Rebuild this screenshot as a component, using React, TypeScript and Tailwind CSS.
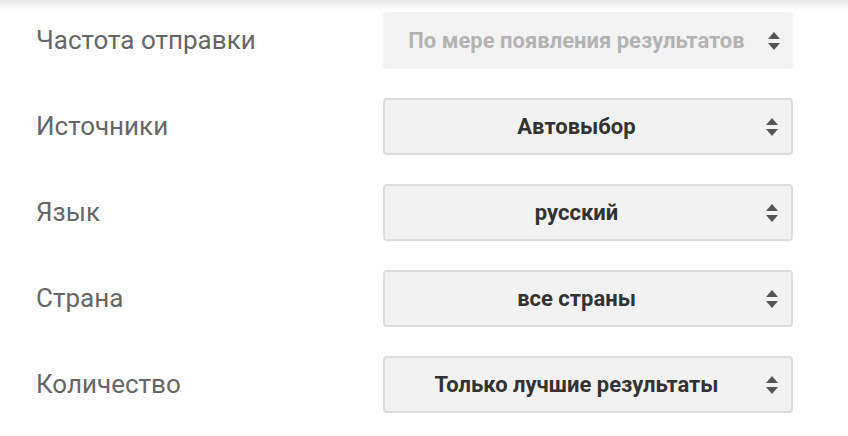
import { ReactNode } from 'react';

const rows = [
    { label: 'Частота отправки', value: 'По мере появления результатов', disabled: true },
    { label: 'Источники', value: 'Автовыбор' },
    { label: 'Язык', value: 'русский' },
    { label: 'Страна', value: 'все страны' },
    { label: 'Количество', value: 'Только лучшие результаты' },
];

const Arrows = () => (
    <svg width="14" height="24" viewBox="0 0 14 24" className="text-[#555]">
        <path d="M7 3 L13 10 L1 10 Z" fill="currentColor" />
        <path d="M1 14 L13 14 L7 21 Z" fill="currentColor" />
    </svg>
);

const Select = ({ children, disabled }: { children: ReactNode; disabled?: boolean }) => (
    <div
        className={
            'flex h-[57px] w-[410px] items-center rounded-[4px] pl-3 pr-3 ' +
            (disabled
                ? 'bg-[#f3f3f3] text-[#b3b3b3]'
                : 'border-2 border-[#dcdcdc] bg-[#f2f2f2] text-[#333]')
        }
    >
        <span className="flex-1 pr-[9px] text-center text-[22px] font-bold">{children}</span>
        <Arrows />
    </div>
);

export default function App() {
    return (
        <div className="min-h-[436px] w-[848px] bg-[linear-gradient(to_bottom,#e6e6e6_0px,#fdfdfd_9px,#ffffff_12px)] font-['Roboto',sans-serif]">
            <div className="flex flex-col gap-[29px] pl-9 pt-3">
                {rows.map((r) => (
                    <div key={r.label} className="flex items-center">
                        <div className="w-[347px] text-[26px] text-[#666]">{r.label}</div>
                        <Select disabled={r.disabled}>{r.value}</Select>
                    </div>
                ))}
            </div>
        </div>
    );
}
